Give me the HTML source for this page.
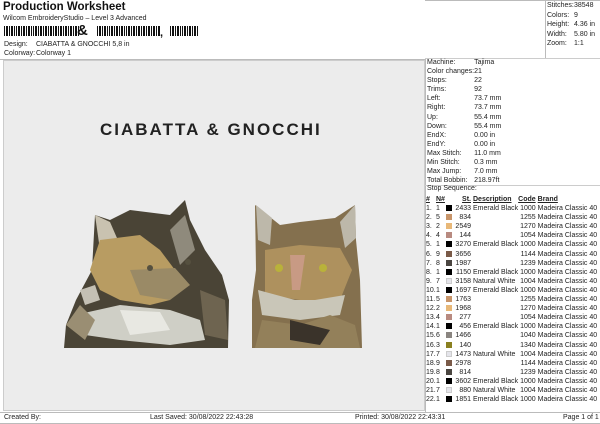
<!DOCTYPE html>
<html><head><meta charset="utf-8"><style>
*{margin:0;padding:0;box-sizing:border-box}
body{width:600px;height:424px;background:#fff;font-family:"Liberation Sans",sans-serif;color:#222;position:relative;overflow:hidden;font-size:7px}
.a{position:absolute;white-space:nowrap}
table{border-collapse:collapse}
td{padding:0;height:9.1px;line-height:9.1px;font-size:7px;white-space:nowrap}
.r td{height:9.5px;line-height:9.5px}
.sw{display:inline-block;width:6px;height:6px;vertical-align:-1px}
</style></head><body>
<div class="a" style="left:3px;top:1px;font-size:11.5px;font-weight:bold;color:#111">Production Worksheet</div>
<div class="a" style="left:3px;top:15px;font-size:7px">Wilcom EmbroideryStudio – Level 3 Advanced</div>
<svg class="a" style="left:4px;top:26px" width="200" height="12">
<g fill="#111">
<rect x="0" y="0" width="1" height="10"/><rect x="2" y="0" width="2" height="10"/><rect x="5" y="0" width="1" height="10"/><rect x="7" y="0" width="2" height="10"/><rect x="10" y="0" width="1" height="10"/><rect x="12" y="0" width="1" height="10"/><rect x="14" y="0" width="2" height="10"/><rect x="17" y="0" width="1" height="10"/><rect x="19" y="0" width="2" height="10"/><rect x="22" y="0" width="1" height="10"/><rect x="24" y="0" width="2" height="10"/><rect x="27" y="0" width="1" height="10"/><rect x="29" y="0" width="1" height="10"/><rect x="31" y="0" width="2" height="10"/><rect x="34" y="0" width="1" height="10"/><rect x="36" y="0" width="2" height="10"/><rect x="39" y="0" width="1" height="10"/><rect x="41" y="0" width="2" height="10"/><rect x="44" y="0" width="1" height="10"/><rect x="46" y="0" width="2" height="10"/><rect x="49" y="0" width="1" height="10"/><rect x="51" y="0" width="2" height="10"/><rect x="54" y="0" width="1" height="10"/><rect x="56" y="0" width="2" height="10"/><rect x="59" y="0" width="1" height="10"/><rect x="61" y="0" width="2" height="10"/><rect x="64" y="0" width="1" height="10"/><rect x="66" y="0" width="2" height="10"/><rect x="69" y="0" width="1" height="10"/><rect x="71" y="0" width="2" height="10"/><rect x="74" y="0" width="1" height="10"/>
<rect x="93" y="0" width="1" height="10"/><rect x="95" y="0" width="2" height="10"/><rect x="98" y="0" width="1" height="10"/><rect x="100" y="0" width="2" height="10"/><rect x="103" y="0" width="1" height="10"/><rect x="105" y="0" width="1" height="10"/><rect x="107" y="0" width="2" height="10"/><rect x="110" y="0" width="1" height="10"/><rect x="112" y="0" width="2" height="10"/><rect x="115" y="0" width="1" height="10"/><rect x="117" y="0" width="2" height="10"/><rect x="120" y="0" width="1" height="10"/><rect x="122" y="0" width="1" height="10"/><rect x="124" y="0" width="2" height="10"/><rect x="127" y="0" width="1" height="10"/><rect x="129" y="0" width="2" height="10"/><rect x="132" y="0" width="1" height="10"/><rect x="134" y="0" width="2" height="10"/><rect x="137" y="0" width="1" height="10"/><rect x="139" y="0" width="2" height="10"/><rect x="142" y="0" width="1" height="10"/><rect x="144" y="0" width="2" height="10"/><rect x="147" y="0" width="1" height="10"/><rect x="149" y="0" width="2" height="10"/><rect x="152" y="0" width="1" height="10"/><rect x="154" y="0" width="2" height="10"/>
<rect x="166" y="0" width="1" height="10"/><rect x="168" y="0" width="2" height="10"/><rect x="171" y="0" width="1" height="10"/><rect x="173" y="0" width="2" height="10"/><rect x="176" y="0" width="1" height="10"/><rect x="178" y="0" width="1" height="10"/><rect x="180" y="0" width="2" height="10"/><rect x="183" y="0" width="1" height="10"/><rect x="185" y="0" width="2" height="10"/><rect x="188" y="0" width="1" height="10"/><rect x="190" y="0" width="2" height="10"/><rect x="193" y="0" width="1" height="10"/>
</g></svg>
<div class="a" style="left:77px;top:22px;font-size:15px;font-weight:bold;color:#111">&amp;</div>
<div class="a" style="left:160px;top:27px;font-size:11px;font-weight:bold;color:#111">,</div>
<div class="a" style="left:4px;top:41px">Design:</div><div class="a" style="left:36px;top:41px">CIABATTA &amp; GNOCCHI 5,8 in</div>
<div class="a" style="left:4px;top:50px">Colorway:</div><div class="a" style="left:36px;top:50px">Colorway 1</div>
<div class="a" style="left:0;top:59px;width:425px;height:1px;background:#bbb"></div>
<div class="a" style="left:3px;top:60px;width:422px;height:351px;background:#ececec;border:1px solid #ccc"></div>
<div class="a" style="left:100px;top:120px;font-size:17px;font-weight:bold;letter-spacing:2px;color:#222">CIABATTA &amp; GNOCCHI</div>
<svg class="a" style="left:0;top:0" width="425" height="424">
<path d="M64 348 L66 325 L76 300 L92 270 L95 215 L110 220 L130 210 L170 215 L185 200 L190 220 L205 250 L222 275 L229 300 L228 348 Z" fill="#4a4436"/>
<path d="M95 215 L110 222 L120 245 L100 250 Z" fill="#c9c2b0"/>
<path d="M100 240 L140 235 L160 250 L175 270 L170 300 L150 305 L120 300 L100 290 L90 270 Z" fill="#b89c62"/>
<path d="M130 270 L175 268 L190 285 L170 300 L140 295 Z" fill="#9a8a66"/>
<path d="M75 315 L120 305 L170 310 L200 320 L205 340 L170 345 L120 340 L85 335 Z" fill="#cfcfc6"/>
<path d="M120 310 L160 312 L170 330 L130 335 Z" fill="#e8e8e2"/>
<path d="M170 230 L185 215 L195 250 L180 265 Z" fill="#8f8a7c"/>
<path d="M200 290 L225 300 L228 340 L205 335 Z" fill="#6e6450"/>
<path d="M66 325 L80 305 L95 320 L85 340 Z" fill="#9a8e73"/>
<path d="M80 290 L95 285 L100 300 L85 305 Z" fill="#c4c0b4"/>
<path d="M252 348 L252 300 L256 270 L255 205 L280 225 L300 222 L335 218 L355 205 L356 240 L360 280 L362 348 Z" fill="#84704e"/>
<path d="M256 205 L272 218 L270 245 L258 240 Z" fill="#bdb8aa"/>
<path d="M355 205 L340 222 L345 248 L356 238 Z" fill="#bdb8aa"/>
<path d="M265 250 L300 245 L340 248 L352 270 L340 300 L300 300 L265 295 Z" fill="#ae915e"/>
<path d="M258 290 L295 300 L315 300 L345 295 L340 315 L300 320 L262 315 Z" fill="#c9c6b8"/>
<path d="M290 255 L305 255 L300 290 L292 290 Z" fill="#c89a84"/>
<path d="M262 320 L300 325 L330 315 L355 325 L360 348 L255 348 Z" fill="#93805a"/>
<path d="M290 320 L330 330 L320 345 L290 340 Z" fill="#3a332a"/>
<circle cx="279" cy="268" r="4" fill="#b9b23a"/><circle cx="323" cy="268" r="4" fill="#b9b23a"/>
<circle cx="150" cy="268" r="3" fill="#55503f"/><circle cx="188" cy="262" r="3" fill="#55503f"/>
</svg>
<div class="a" style="left:0;top:412px;width:600px;height:1px;background:#bbb"></div>
<div class="a" style="left:4px;top:414px">Created By:</div>
<div class="a" style="left:150px;top:414px">Last Saved: 30/08/2022 22:43:28</div>
<div class="a" style="left:355px;top:414px">Printed: 30/08/2022 22:43:31</div>
<div class="a" style="left:563px;top:414px">Page 1 of 1</div>
<div class="a" style="left:0;top:423px;width:600px;height:1px;background:#bbb"></div>
<div class="a" style="left:425px;top:59px;width:1px;height:353px;background:#bbb"></div>
<div class="a" style="left:545px;top:0;width:1px;height:58px;background:#bbb"></div>
<div class="a" style="left:425px;top:0;width:175px;height:1px;background:#bbb"></div>
<table class="a r" style="left:547px;top:1px"><tr><td style="width:27px">Stitches:</td><td>38548</td></tr><tr><td>Colors:</td><td>9</td></tr><tr><td>Height:</td><td>4.36 in</td></tr><tr><td>Width:</td><td>5.80 in</td></tr><tr><td>Zoom:</td><td>1:1</td></tr></table>
<div class="a" style="left:425px;top:58px;width:175px;height:1px;background:#ccc"></div>
<table class="a" style="left:427px;top:58px"><tr><td style="width:47px">Machine:</td><td>Tajima</td></tr><tr><td>Color changes:</td><td>21</td></tr><tr><td>Stops:</td><td>22</td></tr><tr><td>Trims:</td><td>92</td></tr><tr><td>Left:</td><td>73.7 mm</td></tr><tr><td>Right:</td><td>73.7 mm</td></tr><tr><td>Up:</td><td>55.4 mm</td></tr><tr><td>Down:</td><td>55.4 mm</td></tr><tr><td>EndX:</td><td>0.00 in</td></tr><tr><td>EndY:</td><td>0.00 in</td></tr><tr><td>Max Stitch:</td><td>11.0 mm</td></tr><tr><td>Min Stitch:</td><td>0.3 mm</td></tr><tr><td>Max Jump:</td><td>7.0 mm</td></tr><tr><td>Total Bobbin:</td><td>218.97ft</td></tr></table>
<div class="a" style="left:425px;top:185px;width:175px;height:1px;background:#ccc"></div>
<div class="a" style="left:427px;top:185px">Stop Sequence:</div>
<table class="a" style="left:426px;top:195px;width:173px">
<tr style="font-weight:bold;text-decoration:underline"><td style="width:10px">#</td><td style="width:10px">N#</td><td style="width:8px"></td><td style="width:17px;text-align:right">St.</td><td style="padding-left:2px;width:47px">Description</td><td style="width:16px;text-align:right">Code</td><td style="padding-left:2px">Brand</td></tr>
<tr><td>1.</td><td>1</td><td><span class="sw" style="background:#000"></span></td><td align="right">2433</td><td style="padding-left:2px">Emerald Black</td><td align="right">1000</td><td style="padding-left:2px">Madeira Classic 40</td></tr>
<tr><td>2.</td><td>5</td><td><span class="sw" style="background:#c8956a"></span></td><td align="right">834</td><td></td><td align="right">1255</td><td style="padding-left:2px">Madeira Classic 40</td></tr>
<tr><td>3.</td><td>2</td><td><span class="sw" style="background:#e8b878"></span></td><td align="right">2549</td><td></td><td align="right">1270</td><td style="padding-left:2px">Madeira Classic 40</td></tr>
<tr><td>4.</td><td>4</td><td><span class="sw" style="background:#b88a80"></span></td><td align="right">144</td><td></td><td align="right">1054</td><td style="padding-left:2px">Madeira Classic 40</td></tr>
<tr><td>5.</td><td>1</td><td><span class="sw" style="background:#000"></span></td><td align="right">3270</td><td style="padding-left:2px">Emerald Black</td><td align="right">1000</td><td style="padding-left:2px">Madeira Classic 40</td></tr>
<tr><td>6.</td><td>9</td><td><span class="sw" style="background:#7a5a48"></span></td><td align="right">3656</td><td></td><td align="right">1144</td><td style="padding-left:2px">Madeira Classic 40</td></tr>
<tr><td>7.</td><td>8</td><td><span class="sw" style="background:#4a4540"></span></td><td align="right">1987</td><td></td><td align="right">1239</td><td style="padding-left:2px">Madeira Classic 40</td></tr>
<tr><td>8.</td><td>1</td><td><span class="sw" style="background:#000"></span></td><td align="right">1150</td><td style="padding-left:2px">Emerald Black</td><td align="right">1000</td><td style="padding-left:2px">Madeira Classic 40</td></tr>
<tr><td>9.</td><td>7</td><td><span class="sw" style="background:#e4e4ea;border:1px solid #ccc"></span></td><td align="right">3158</td><td style="padding-left:2px">Natural White</td><td align="right">1004</td><td style="padding-left:2px">Madeira Classic 40</td></tr>
<tr><td>10.</td><td>1</td><td><span class="sw" style="background:#000"></span></td><td align="right">1697</td><td style="padding-left:2px">Emerald Black</td><td align="right">1000</td><td style="padding-left:2px">Madeira Classic 40</td></tr>
<tr><td>11.</td><td>5</td><td><span class="sw" style="background:#c8956a"></span></td><td align="right">1763</td><td></td><td align="right">1255</td><td style="padding-left:2px">Madeira Classic 40</td></tr>
<tr><td>12.</td><td>2</td><td><span class="sw" style="background:#e8b878"></span></td><td align="right">1968</td><td></td><td align="right">1270</td><td style="padding-left:2px">Madeira Classic 40</td></tr>
<tr><td>13.</td><td>4</td><td><span class="sw" style="background:#b88a80"></span></td><td align="right">277</td><td></td><td align="right">1054</td><td style="padding-left:2px">Madeira Classic 40</td></tr>
<tr><td>14.</td><td>1</td><td><span class="sw" style="background:#000"></span></td><td align="right">456</td><td style="padding-left:2px">Emerald Black</td><td align="right">1000</td><td style="padding-left:2px">Madeira Classic 40</td></tr>
<tr><td>15.</td><td>6</td><td><span class="sw" style="background:#8a8580"></span></td><td align="right">1466</td><td></td><td align="right">1040</td><td style="padding-left:2px">Madeira Classic 40</td></tr>
<tr><td>16.</td><td>3</td><td><span class="sw" style="background:#8a8020"></span></td><td align="right">140</td><td></td><td align="right">1340</td><td style="padding-left:2px">Madeira Classic 40</td></tr>
<tr><td>17.</td><td>7</td><td><span class="sw" style="background:#e4e4ea;border:1px solid #ccc"></span></td><td align="right">1473</td><td style="padding-left:2px">Natural White</td><td align="right">1004</td><td style="padding-left:2px">Madeira Classic 40</td></tr>
<tr><td>18.</td><td>9</td><td><span class="sw" style="background:#7a5a48"></span></td><td align="right">2978</td><td></td><td align="right">1144</td><td style="padding-left:2px">Madeira Classic 40</td></tr>
<tr><td>19.</td><td>8</td><td><span class="sw" style="background:#4a4540"></span></td><td align="right">814</td><td></td><td align="right">1239</td><td style="padding-left:2px">Madeira Classic 40</td></tr>
<tr><td>20.</td><td>1</td><td><span class="sw" style="background:#000"></span></td><td align="right">3602</td><td style="padding-left:2px">Emerald Black</td><td align="right">1000</td><td style="padding-left:2px">Madeira Classic 40</td></tr>
<tr><td>21.</td><td>7</td><td><span class="sw" style="background:#e4e4ea;border:1px solid #ccc"></span></td><td align="right">880</td><td style="padding-left:2px">Natural White</td><td align="right">1004</td><td style="padding-left:2px">Madeira Classic 40</td></tr>
<tr><td>22.</td><td>1</td><td><span class="sw" style="background:#000"></span></td><td align="right">1851</td><td style="padding-left:2px">Emerald Black</td><td align="right">1000</td><td style="padding-left:2px">Madeira Classic 40</td></tr>
</table>
</body></html>
